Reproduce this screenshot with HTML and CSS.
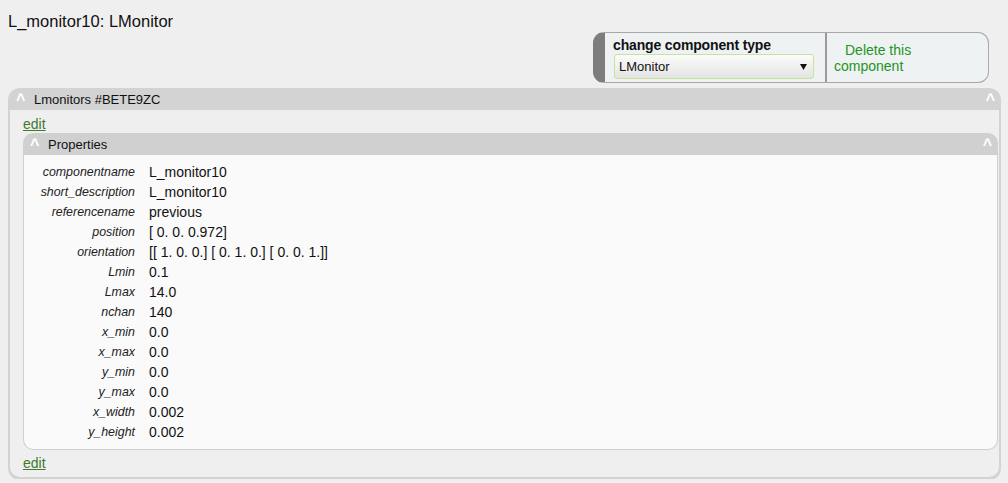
FILE: index.html
```html
<!DOCTYPE html>
<html>
<head>
<meta charset="utf-8">
<link rel="stylesheet" href="styles.css">
</head>
<body>
<div class="title">L_monitor10: LMonitor</div>
<div class="toolbar-row">
  <div class="toolbar">
    <div class="tool-cell type-cell">
      <div class="tool-label">change component type</div>
      <div class="select"><span>LMonitor</span><svg class="arrow" width="7" height="6" viewBox="0 0 7 6"><path d="M0 0H7L3.5 6Z" fill="#111"/></svg></div>
    </div>
    <div class="tool-cell delete-cell"><a class="delete">Delete this component</a></div>
  </div>
</div>
<div class="panel">
  <div class="panel-head"><span class="caret">^</span><span class="head-text">Lmonitors #BETE9ZC</span><span class="caret right">^</span></div>
  <div class="panel-body">
    <a class="edit">edit</a>
    <div class="inner">
      <div class="inner-head"><span class="caret">^</span><span class="head-text">Properties</span><span class="caret right">^</span></div>
      <div class="inner-body">
        <div class="props">
          <div class="k">componentname</div><div class="v">L_monitor10</div>
          <div class="k">short_description</div><div class="v">L_monitor10</div>
          <div class="k">referencename</div><div class="v">previous</div>
          <div class="k">position</div><div class="v">[ 0. 0. 0.972]</div>
          <div class="k">orientation</div><div class="v">[[ 1. 0. 0.] [ 0. 1. 0.] [ 0. 0. 1.]]</div>
          <div class="k">Lmin</div><div class="v">0.1</div>
          <div class="k">Lmax</div><div class="v">14.0</div>
          <div class="k">nchan</div><div class="v">140</div>
          <div class="k">x_min</div><div class="v">0.0</div>
          <div class="k">x_max</div><div class="v">0.0</div>
          <div class="k">y_min</div><div class="v">0.0</div>
          <div class="k">y_max</div><div class="v">0.0</div>
          <div class="k">x_width</div><div class="v">0.002</div>
          <div class="k">y_height</div><div class="v">0.002</div>
        </div>
      </div>
    </div>
    <a class="edit bottom">edit</a>
  </div>
</div>
</body>
</html>
```
FILE: styles.css
```css
html, body {
  margin: 0;
  padding: 0;
  background: #efefef;
}
body {
  padding: 12px 7px 0 8px;
  font-family: "Liberation Sans", Arial, sans-serif;
  color: #111;
}
.title {
  font-size: 16.5px;
  line-height: 18px;
  height: 18px;
}
.toolbar-row {
  display: flex;
  justify-content: flex-end;
  margin-top: 2px;
  padding-right: 12px;
}
.toolbar {
  display: flex;
  flex: none;
  height: 49px;
  border: 1px solid #a8a8a8;
  border-left: 12px solid #7d7d7d;
  border-radius: 11px;
  background: #eef2f2;
}
.tool-cell {
  box-sizing: border-box;
  flex: none;
}
.type-cell {
  width: 222px;
  padding: 3px 0 0 8px;
  border-right: 2px solid #9a9a9a;
}
.tool-label {
  font-weight: bold;
  font-size: 14px;
  line-height: 18px;
  letter-spacing: -0.15px;
}
.select {
  box-sizing: border-box;
  width: 200px;
  height: 25px;
  margin: 0 0 0 1px;
  border: 1px solid #c8e39a;
  border-radius: 3px;
  background: linear-gradient(#fbfbfb, #e4e4e4);
  display: flex;
  align-items: center;
  justify-content: space-between;
  padding: 0 6px 0 4px;
  font-size: 13px;
}
.arrow { display: block; margin-top: 1px; }
.delete-cell {
  width: 161px;
  padding: 9px 0 0 7px;
}
.delete {
  font-size: 14px;
  line-height: 16px;
  color: #1e951e;
  display: block;
  width: 120px;
  text-indent: 11px;
}
.panel {
  margin-top: 5px;
  width: 993px;
}
.panel-head, .inner-head {
  display: flex;
  align-items: center;
  height: 22px;
  background: #d3d3d3;
  font-size: 13px;
}
.panel-head {
  border-radius: 12px 12px 0 0;
}
.caret {
  align-self: flex-start;
  color: #fff;
  font-weight: bold;
  font-size: 16px;
  line-height: 22px;
  height: 22px;
  padding-top: 1px;
  box-sizing: border-box;
}
.panel-head .caret:first-child { margin-left: 8px; width: 18px; }
.panel-head .caret.right { margin-left: auto; margin-right: 6px; width: auto; }
.inner-head .caret:first-child { margin-left: 7px; width: 18px; }
.inner-head .caret.right { margin-left: auto; margin-right: 6px; width: auto; }
.head-text {
  color: #111;
}
.panel-body {
  border: 2px solid #d3d3d3;
  border-top: none;
  border-radius: 0 0 12px 12px;
  padding: 7px 1px 6px 13px;
  box-shadow: 0 1px 0 #c7c7c7;
}
.edit {
  display: block;
  width: max-content;
  font-size: 14px;
  line-height: 15px;
  color: #3f7a2c;
  text-decoration: underline;
}
.edit.bottom {
  margin-top: 5px;
  line-height: 16px;
}
.inner {
  margin-top: 1px;
}
.inner-head {
  border-radius: 10px 10px 0 0;
  background: #d0d0d0;
}
.inner-body {
  background: #fafafa;
  border: 1px solid #cfcfcf;
  border-top: none;
  border-radius: 0 0 10px 10px;
  padding: 7px 0 7px 0;
}
.props {
  display: grid;
  grid-template-columns: 111px auto;
  column-gap: 14px;
  grid-auto-rows: 20px;
  align-items: center;
}
.k {
  text-align: right;
  font-style: italic;
  font-size: 12.4px;
  color: #222;
}
.v {
  font-size: 14px;
  color: #111;
}
```
